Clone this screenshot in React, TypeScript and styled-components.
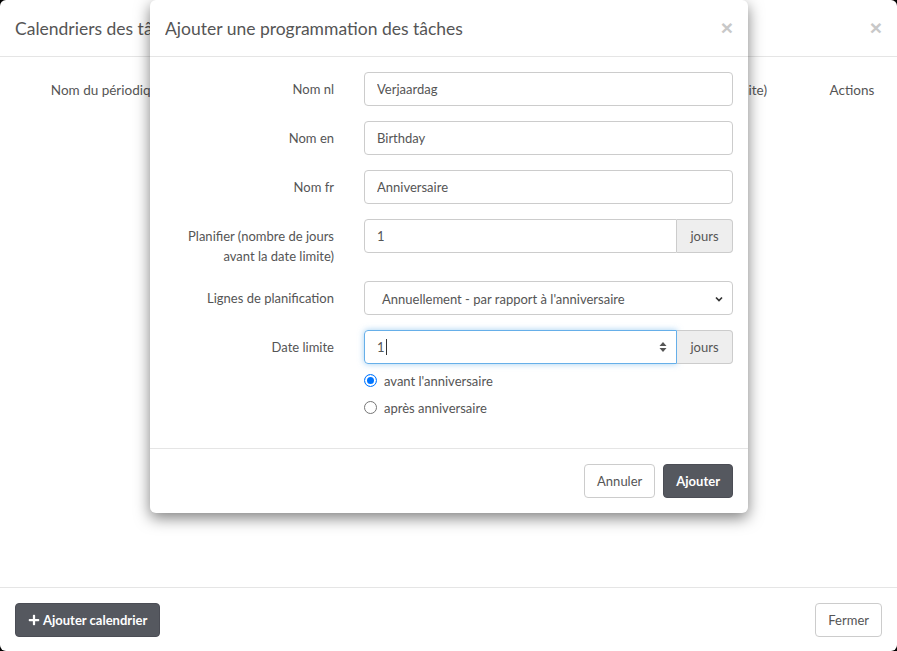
import styled, { createGlobalStyle } from 'styled-components'
import { FaPlus } from 'react-icons/fa'

const GlobalStyle = createGlobalStyle`
  html, body {
    margin: 0;
    padding: 0;
    background: #000;
  }
  body {
    font-family: Lato, sans-serif;
    font-size: 14px;
    color: #555;
  }
  * { box-sizing: border-box; }
`

const App = (): JSX.Element => {
  return (
    <>
      <GlobalStyle />
      <Page>
        <BackModal>
          <Header>
            <Title>Calendriers des tâches</Title>
            <Close>×</Close>
          </Header>
          <BackBody>
            <TableHead>
              <Th>Nom du périodique</Th>
              <Th>Planifier</Th>
              <Th $right>Jours (avant la date limite)</Th>
              <Th>Actions</Th>
            </TableHead>
          </BackBody>
          <Footer>
            <DarkButton>
              <FaPlus size={12} />
              Ajouter calendrier
            </DarkButton>
            <LightButton>Fermer</LightButton>
          </Footer>
        </BackModal>

        <FrontModal>
          <Header>
            <Title>Ajouter une programmation des tâches</Title>
            <Close>×</Close>
          </Header>
          <FrontBody>
            <Row>
              <Label>Nom nl</Label>
              <Field>
                <Input defaultValue="Verjaardag" />
              </Field>
            </Row>
            <Row>
              <Label>Nom en</Label>
              <Field>
                <Input defaultValue="Birthday" />
              </Field>
            </Row>
            <Row>
              <Label>Nom fr</Label>
              <Field>
                <Input defaultValue="Anniversaire" />
              </Field>
            </Row>
            <Row>
              <Label>Planifier (nombre de jours avant la date limite)</Label>
              <Field>
                <InputGroup>
                  <GroupInput defaultValue="1" />
                  <Addon>jours</Addon>
                </InputGroup>
              </Field>
            </Row>
            <Row>
              <Label>Lignes de planification</Label>
              <Field>
                <Select>
                  <span>Annuellement - par rapport à l'anniversaire</span>
                  <svg width="10" height="10" viewBox="0 0 10 10">
                    <path d="M2 3.5 L5 6.5 L8 3.5" fill="none" stroke="#333" strokeWidth="1.7" />
                  </svg>
                </Select>
              </Field>
            </Row>
            <Row $last>
              <Label>Date limite</Label>
              <Field>
                <InputGroup>
                  <NumberBox>
                    <span>1</span>
                    <Caret />
                    <Spacer />
                    <svg width="8" height="14" viewBox="0 0 8 14">
                      <path d="M0.5 6 L4 2 L7.5 6 Z" fill="#555" />
                      <path d="M0.5 8 L4 12 L7.5 8 Z" fill="#555" />
                    </svg>
                  </NumberBox>
                  <Addon>jours</Addon>
                </InputGroup>
                <Radios>
                  <RadioRow>
                    <Radio $checked />
                    avant l'anniversaire
                  </RadioRow>
                  <RadioRow>
                    <Radio />
                    après anniversaire
                  </RadioRow>
                </Radios>
              </Field>
            </Row>
          </FrontBody>
          <FrontFooter>
            <LightButton>Annuler</LightButton>
            <DarkButton>Ajouter</DarkButton>
          </FrontFooter>
        </FrontModal>
      </Page>
    </>
  )
}

const Page = styled.div`
  position: relative;
  width: 897px;
  height: 651px;
  overflow: hidden;
`

const BackModal = styled.div`
  width: 897px;
  height: 651px;
  background: #fff;
  border-radius: 6px;
  display: flex;
  flex-direction: column;
`

const Header = styled.div`
  height: 57px;
  flex-shrink: 0;
  padding: 0 15px;
  border-bottom: 1px solid #e5e5e5;
  display: flex;
  align-items: center;
  justify-content: space-between;
`

const Title = styled.div`
  font-size: 17.5px;
  color: #555;
  white-space: nowrap;
  overflow: hidden;
`

const Close = styled.div`
  font-size: 21px;
  font-weight: bold;
  color: #c8c8c8;
  line-height: 1;
  padding-bottom: 2px;
  font-family: "Liberation Sans", sans-serif;
`

const BackBody = styled.div`
  flex: 1;
  padding: 15px;
`

const TableHead = styled.div`
  display: grid;
  grid-template-columns: 186px 1fr 330px 60px;
  align-items: center;
  height: 36px;
`

const Th = styled.div<{ $right?: boolean }>`
  font-size: 13.5px;
  color: #555;
  text-align: ${(p) => (p.$right ? 'right' : 'center')};
  padding-right: ${(p) => (p.$right ? '55px' : '0')};
  white-space: nowrap;
`

const Footer = styled.div`
  height: 64px;
  flex-shrink: 0;
  border-top: 1px solid #e5e5e5;
  padding: 0 15px;
  display: flex;
  align-items: center;
  justify-content: space-between;
`

const DarkButton = styled.button`
  height: 34px;
  padding: 0 12px;
  background: #55585f;
  color: #fff;
  border: 1px solid #4b4d55;
  border-radius: 4px;
  font-family: inherit;
  font-size: 13px;
  font-weight: bold;
  display: flex;
  align-items: center;
  gap: 3px;
`

const LightButton = styled.button`
  height: 34px;
  padding: 0 12px;
  background: #fff;
  color: #555;
  border: 1px solid #ccc;
  border-radius: 4px;
  font-family: inherit;
  font-size: 13px;
`

const FrontModal = styled.div`
  position: absolute;
  left: 150px;
  top: 0;
  width: 598px;
  background: #fff;
  border-radius: 6px;
  box-shadow: 0 5px 15px rgba(0, 0, 0, 0.5);
  display: flex;
  flex-direction: column;
`

const FrontBody = styled.div`
  padding: 15px 15px 27px;
`

const Row = styled.div<{ $last?: boolean }>`
  display: grid;
  grid-template-columns: 169px 1fr;
  column-gap: 30px;
  margin-bottom: ${(p) => (p.$last ? '0' : '15px')};
`

const Label = styled.div`
  padding-top: 7px;
  text-align: right;
  font-size: 13px;
  line-height: 20px;
  color: #555;
`

const Field = styled.div`
  display: flex;
  flex-direction: column;
`

const Input = styled.input`
  height: 34px;
  padding: 0 12px;
  border: 1px solid #ccc;
  border-radius: 4px;
  font-family: inherit;
  font-size: 13px;
  color: #555;
  outline: none;
`

const InputGroup = styled.div`
  display: flex;
  height: 34px;
`

const GroupInput = styled(Input)`
  flex: 1;
  min-width: 0;
  border-radius: 4px 0 0 4px;
`

const NumberBox = styled.div`
  flex: 1;
  display: flex;
  align-items: center;
  padding: 0 9px 0 12px;
  border: 1px solid #66afe9;
  border-radius: 4px 0 0 4px;
  box-shadow: 0 0 6px rgba(102, 175, 233, 0.6);
  font-size: 13px;
  color: #555;
`

const Caret = styled.span`
  width: 1px;
  height: 16px;
  background: #333;
  margin-left: 1px;
`

const Spacer = styled.span`
  flex: 1;
`

const Addon = styled.div`
  width: 56px;
  display: flex;
  align-items: center;
  justify-content: center;
  background: #eee;
  border: 1px solid #ccc;
  border-left: none;
  border-radius: 0 4px 4px 0;
  font-size: 13px;
  color: #555;
`

const Select = styled.div`
  height: 34px;
  padding: 2px 8px 0 17px;
  border: 1px solid #ccc;
  border-radius: 4px;
  display: flex;
  align-items: center;
  justify-content: space-between;
  font-size: 13px;
  color: #555;
`

const Radios = styled.div`
  display: flex;
  flex-direction: column;
  padding-top: 3px;
`

const RadioRow = styled.div`
  display: flex;
  align-items: center;
  gap: 7px;
  height: 27px;
  font-size: 13px;
  color: #555;
`

const Radio = styled.span<{ $checked?: boolean }>`
  width: 13px;
  height: 13px;
  border-radius: 50%;
  border: ${(p) => (p.$checked ? '1px solid #0075ff' : '1px solid #767676')};
  background: #fff;
  box-shadow: ${(p) => (p.$checked ? 'inset 0 0 0 2px #fff, inset 0 0 0 6px #0075ff' : 'none')};
`

const FrontFooter = styled.div`
  border-top: 1px solid #e5e5e5;
  padding: 15px;
  display: flex;
  justify-content: flex-end;
  gap: 8px;
`

export default App
